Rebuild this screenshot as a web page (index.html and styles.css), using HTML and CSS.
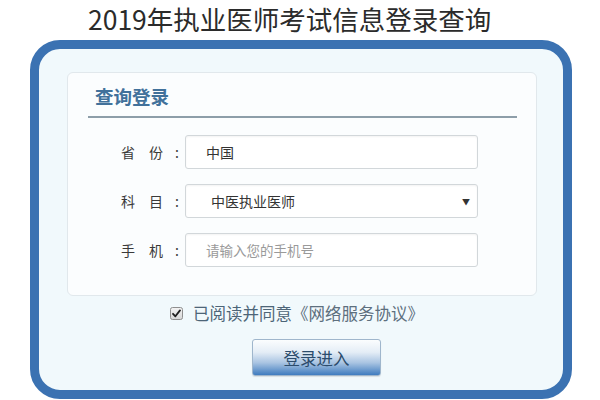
FILE: index.html
```html
<!DOCTYPE html>
<html lang="zh-CN">
<head>
<meta charset="utf-8">
<title>2019年执业医师考试信息登录查询</title>
<link rel="stylesheet" href="styles.css">
</head>
<body>
  <h1 class="title">2019年执业医师考试信息登录查询</h1>
  <div class="box">
    <div class="panel">
      <h2 class="panel-head">查询登录</h2>
      <div class="form">
        <div class="row">
          <label class="label"><span>省　份</span><span class="colon">:</span></label>
          <div class="field"><span class="value">中国</span></div>
        </div>
        <div class="row">
          <label class="label"><span>科　目</span><span class="colon">:</span></label>
          <div class="field select"><span class="value">中医执业医师</span><span class="arrow">▼</span></div>
        </div>
        <div class="row">
          <label class="label"><span>手　机</span><span class="colon">:</span></label>
          <div class="field"><span class="placeholder">请输入您的手机号</span></div>
        </div>
      </div>
    </div>
    <div class="agree">
      <svg class="check" width="13" height="13" viewBox="0 0 13 13">
        <defs>
          <linearGradient id="cb" x1="0" y1="0" x2="0" y2="1">
            <stop offset="0" stop-color="#f4f4f4"/>
            <stop offset="1" stop-color="#d6d6d6"/>
          </linearGradient>
        </defs>
        <rect x="0.5" y="0.5" width="12" height="12" rx="2" fill="url(#cb)" stroke="#8f8f8f"/>
        <path d="M3 6.8 L5.4 9.3 L10 3.4" fill="none" stroke="#1e1e1e" stroke-width="1.8" stroke-linecap="round" stroke-linejoin="round"/>
      </svg>
      <span class="agree-text">已阅读并同意<span class="link">《网络服务协议》</span></span>
    </div>
    <div class="actions">
      <button class="btn" type="button">登录进入</button>
    </div>
  </div>
</body>
</html>
```
FILE: styles.css
```css
html, body {
  margin: 0;
  padding: 0;
  background: #ffffff;
}

body {
  font-family: "Noto Sans CJK SC", "Noto Sans", sans-serif;
  color: #333;
  width: 600px;
  height: 400px;
  overflow: hidden;
}

.title {
  margin: 0;
  padding-left: 88px;
  font-size: 26.5px;
  font-weight: normal;
  line-height: 38px;
  height: 38px;
  color: #2b2b2b;
}

.box {
  box-sizing: border-box;
  width: 542px;
  height: 359px;
  margin: 2px 0 0 30px;
  border: 9px solid #3b72b2;
  border-radius: 30px;
  background: #f1f9fc;
  padding: 23px 26px 0 28px;
}

.panel {
  box-sizing: border-box;
  height: 224px;
  border: 1px solid #e1e8ec;
  border-radius: 6px;
  background: #fbfdfe;
  padding: 0 19px 0 20px;
}

.panel-head {
  margin: 0;
  padding: 10px 0 7px 7px;
  font-size: 18.5px;
  line-height: 26px;
  font-weight: bold;
  color: #41719b;
  border-bottom: 2px solid #8d9ea9;
}

.form {
  display: flex;
  flex-direction: column;
  gap: 15px;
  margin-top: 17px;
  margin-left: -20px;
}

.row {
  display: flex;
  align-items: center;
  height: 34px;
}

.label {
  box-sizing: border-box;
  width: 117px;
  padding-right: 6px;
  display: flex;
  justify-content: flex-end;
  align-items: center;
  font-size: 14px;
  color: #3a3a3a;
}

.colon {
  margin-left: 12px;
}

.field {
  box-sizing: border-box;
  width: 293px;
  height: 34px;
  border: 1px solid #d2d7da;
  border-radius: 3px;
  background: #ffffff;
  box-shadow: inset 0 1px 2px rgba(0, 0, 0, 0.05);
  display: flex;
  align-items: center;
  padding-left: 20px;
  font-size: 14px;
  color: #333;
}

.select {
  padding-left: 25px;
  padding-right: 7px;
  justify-content: space-between;
}

.arrow {
  font-size: 8px;
  color: #333;
}

.placeholder {
  color: #9a9a9a;
  font-size: 13.5px;
}

.agree {
  display: flex;
  align-items: center;
  height: 26px;
  margin-top: 4px;
  padding-left: 103px;
}

.check {
  display: block;
  flex: none;
}

.agree-text {
  margin-left: 10px;
  font-size: 16.5px;
  color: #4d6578;
}

.link {
  color: #5d6f7e;
}

.actions {
  margin-top: 13px;
  padding-left: 185px;
}

.btn {
  display: block;
  box-sizing: border-box;
  width: 129px;
  height: 37px;
  padding: 0;
  border: 1px solid #9fb6cc;
  border-radius: 3px;
  background: linear-gradient(to bottom, #fbfdfe 0%, #e4edf6 35%, #a9c4e2 65%, #3f7cbf 100%);
  font-family: "Noto Sans CJK SC", "Noto Sans", sans-serif;
  font-size: 16.5px;
  color: #2c4c6c;
  box-shadow: 0 1px 1px rgba(0, 0, 0, 0.1);
}
```
